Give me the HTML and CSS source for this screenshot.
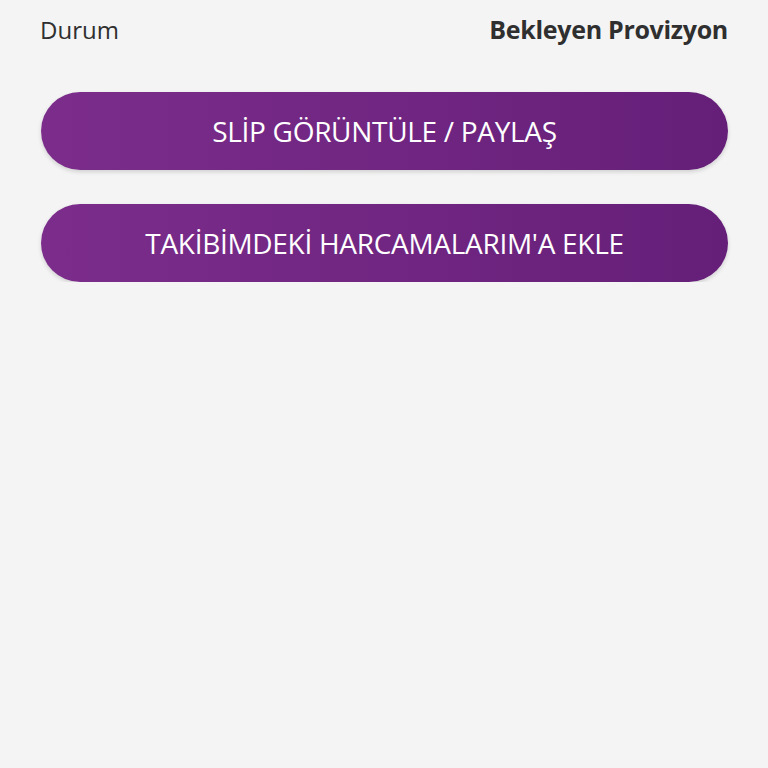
FILE: index.html
```html
<!DOCTYPE html>
<html lang="tr">

<head>
    <meta charset="UTF-8">
    <meta name="viewport" content="width=device-width, initial-scale=1.0">
    <title>Durum</title>
    <link rel="stylesheet" href="styles.css">
</head>

<body>
    <div class="page">
        <div class="row">
            <span class="label">Durum</span>
            <span class="value">Bekleyen Provizyon</span>
        </div>
        <div class="actions">
            <button class="btn">SLİP GÖRÜNTÜLE / PAYLAŞ</button>
            <button class="btn">TAKİBİMDEKİ HARCAMALARIM'A EKLE</button>
        </div>
    </div>
</body>

</html>
```

FILE: styles.css
```css
body {
    margin: 0;
    padding: 0;
    background-color: #f4f4f4;
    font-family: "Open Sans", "Noto Sans", sans-serif;
    color: #2f2f2f;
}

.page {
    padding: 13px 40px 0 41px;
}

.row {
    display: flex;
    justify-content: space-between;
    align-items: center;
    height: 32px;
}

.label {
    font-size: 24px;
    font-weight: 400;
    margin-left: -1px;
}

.value {
    font-size: 25px;
    font-weight: 700;
    letter-spacing: -0.3px;
}

.actions {
    display: flex;
    flex-direction: column;
    gap: 34px;
    margin-top: 47px;
}

.btn {
    height: 78px;
    width: 100%;
    padding: 0;
    border: none;
    border-radius: 39px;
    background: linear-gradient(to right, #7c2d8b, #651f79);
    color: #fff;
    font-family: "Open Sans", "Noto Sans", sans-serif;
    font-size: 28px;
    letter-spacing: -0.3px;
    box-shadow: 0 2px 4px rgba(0, 0, 0, 0.15);
}
```
